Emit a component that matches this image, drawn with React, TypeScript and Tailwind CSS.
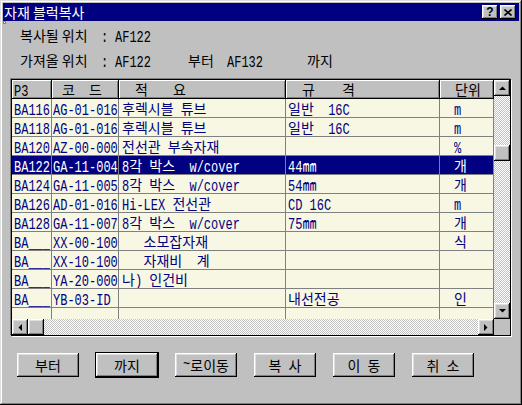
import React from "react";

type Row = { p: string; code: string; desc: string; spec: string; unit: string };

const rows: Row[] = [
  { p: "BA116", code: "AG-01-016", desc: "후렉시블 튜브", spec: "일반  16C", unit: "m" },
  { p: "BA118", code: "AG-01-016", desc: "후렉시블 튜브", spec: "일반  16C", unit: "m" },
  { p: "BA120", code: "AZ-00-000", desc: "전선관 부속자재", spec: "", unit: "%" },
  { p: "BA122", code: "GA-11-004", desc: "8각 박스  w/cover", spec: "44㎜", unit: "개" },
  { p: "BA124", code: "GA-11-005", desc: "8각 박스  w/cover", spec: "54㎜", unit: "개" },
  { p: "BA126", code: "AD-01-016", desc: "Hi-LEX 전선관", spec: "CD 16C", unit: "m" },
  { p: "BA128", code: "GA-11-007", desc: "8각 박스  w/cover", spec: "75㎜", unit: "개" },
  { p: "BA___", code: "XX-00-100", desc: "   소모잡자재", spec: "", unit: "식" },
  { p: "BA___", code: "XX-10-100", desc: "   자재비  계", spec: "", unit: "" },
  { p: "BA___", code: "YA-20-000", desc: "나) 인건비", spec: "", unit: "" },
  { p: "BA___", code: "YB-03-ID", desc: "", spec: "내선전공", unit: "인" },
  { p: "", code: "", desc: "", spec: "", unit: "" },
];

const SELECTED = 3;

// win95 bevels
const raised =
  "bg-[#c0c0c0] shadow-[inset_-1px_-1px_#000,inset_1px_1px_#fff,inset_-2px_-2px_#808080,inset_2px_2px_#dfdfdf]";
const checker =
  "bg-[image:repeating-conic-gradient(#c0c0c0_0%_25%,#ffffff_0%_50%)] bg-[length:2px_2px]";

// DBCS-style text: hangul full width, latin half width
function T({ s }: { s: string }) {
  const parts = s.split(/([\u3000-\u303f\u3130-\u318f\u3300-\u33ff\uac00-\ud7af]+)/);
  return (
    <>
      {parts.map((p, i) =>
        p === "" ? null : i % 2 === 1 ? (
          <span key={i} className="font-['Noto_Sans_CJK_KR',sans-serif] text-[14px]">
            {p}
          </span>
        ) : (
          <span
            key={i}
            className="inline-block scale-y-[1.4] whitespace-pre font-['Liberation_Mono',monospace] text-[12px] leading-[12px]"
          >
            {p}
          </span>
        )
      )}
    </>
  );
}

function Arrow({ dir }: { dir: "up" | "down" | "left" | "right" }) {
  const pts = {
    up: "0,4 7,4 3.5,0.5",
    down: "0,0 7,0 3.5,3.5",
    left: "4,0 4,7 0.5,3.5",
    right: "0,0 0,7 3.5,3.5",
  }[dir];
  const w = dir === "up" || dir === "down" ? 7 : 4;
  const h = dir === "up" || dir === "down" ? 4 : 7;
  return (
    <div className={`flex h-[16px] w-[16px] shrink-0 items-center justify-center ${raised}`}>
      <svg width={w} height={h} viewBox={`0 0 ${w} ${h}`}>
        <polygon points={pts} fill="#000" />
      </svg>
    </div>
  );
}

function GridRow({ r, sel }: { r: Row; sel: boolean }) {
  const tone = sel ? "bg-[#000080] text-white" : "bg-[#f7f7e3] text-[#000080]";
  return (
    <div className={`flex h-[19px] shrink-0 whitespace-pre border-b border-[#808080] leading-[18px] ${tone}`}>
      <div className="w-[40px] shrink-0 overflow-hidden border-r border-[#808080] pl-[2px]"><T s={r.p} /></div>
      <div className="w-[67px] shrink-0 overflow-hidden border-r border-[#808080] pl-[1px]"><T s={r.code} /></div>
      <div className="w-[167px] shrink-0 overflow-hidden border-r border-[#808080] pl-[3px]"><T s={r.desc} /></div>
      <div className="w-[154px] shrink-0 overflow-hidden border-r border-[#808080] pl-[2px]"><T s={r.spec} /></div>
      <div className="w-[54px] shrink-0 overflow-hidden border-r border-[#808080] pl-[14px]"><T s={r.unit} /></div>
    </div>
  );
}

const head = "h-[19px] shrink-0 border-r border-b border-black bg-[#c0c0c0] shadow-[inset_1px_1px_#fff,inset_-1px_-1px_#808080] leading-[18px] text-black";

function Button({ label, def }: { label: string; def?: boolean }) {
  return (
    <div
      className={`flex h-[24px] w-[62px] items-center justify-center whitespace-pre text-black ${raised} ${
        def ? "outline outline-1 outline-black" : ""
      }`}
    >
      <T s={label} />
    </div>
  );
}

export default function App() {
  return (
    <div className="relative h-[405px] w-[522px] bg-[#c0c0c0] p-[3px] font-['Noto_Sans_CJK_KR',sans-serif] text-[14px] shadow-[inset_-1px_-1px_#000,inset_1px_1px_#dfdfdf,inset_-2px_-2px_#808080,inset_2px_2px_#fff]">
      {/* title bar */}
      <div className="flex h-[18px] items-center bg-[#000080] pl-[1px] pr-[3px]">
        <span className="leading-[18px] text-white">자재 블럭복사</span>
        <div className="ml-auto flex gap-[2px]">
          <div className={`flex h-[14px] w-[16px] items-center justify-center font-['Liberation_Sans',sans-serif] text-[12px] font-bold leading-none text-black ${raised}`}>
            ?
          </div>
          <div className={`flex h-[14px] w-[16px] items-center justify-center ${raised}`}>
            <svg width="8" height="7" viewBox="0 0 8 7">
              <path d="M0.5 0.5 L7.5 6.5 M7.5 0.5 L0.5 6.5" stroke="#000" strokeWidth="1.6" />
            </svg>
          </div>
        </div>
      </div>
      <div className="absolute left-[3px] top-[21px] h-[3px] w-[3px] border border-[#808080] bg-white" />

      {/* labels */}
      <div className="mt-[5px] flex h-[18px] items-center pl-[17px] leading-[18px] text-black">
        <span className="w-[81px] whitespace-pre">복사될 위치</span>
        <span className="w-[14px]"><T s=":" /></span>
        <span><T s="AF122" /></span>
      </div>
      <div className="mt-[7px] flex h-[18px] items-center pl-[17px] leading-[18px] text-black">
        <span className="w-[81px] whitespace-pre">가져올 위치</span>
        <span className="w-[14px]"><T s=":" /></span>
        <span className="w-[73px]"><T s="AF122" /></span>
        <span className="w-[39px]">부터</span>
        <span className="w-[80px]"><T s="AF132" /></span>
        <span>까지</span>
      </div>

      {/* grid */}
      <div className="ml-[8px] mt-[10px] flex h-[257px] w-[500px] border border-black shadow-[-1px_-1px_#808080,1px_1px_#fff]">
        <div className="flex w-[482px] flex-col">
          <div className="flex">
            <div className={`${head} w-[40px] pl-[2px]`}><T s="P3" /></div>
            <div className={`${head} flex w-[67px] pl-[10px]`}>
              <span>코</span>
              <span className="ml-[14px]">드</span>
            </div>
            <div className={`${head} flex w-[167px] pl-[16px]`}>
              <span>적</span>
              <span className="ml-[25px]">요</span>
            </div>
            <div className={`${head} flex w-[154px] pl-[16px]`}>
              <span>규</span>
              <span className="ml-[27px]">격</span>
            </div>
            <div className={`${head} w-[54px] pl-[15px]`}>단위</div>
          </div>
          <div className="flex h-[220px] flex-col overflow-hidden bg-[#f7f7e3]">
            {rows.map((r, i) => (
              <GridRow key={i} r={r} sel={i === SELECTED} />
            ))}
          </div>
          <div className="flex h-[16px]">
            <Arrow dir="left" />
            <div className={`h-[16px] w-[16px] shrink-0 ${raised}`} />
            <div className={`flex-1 ${checker}`} />
            <Arrow dir="right" />
          </div>
        </div>
        <div className="flex w-[16px] flex-col">
          <Arrow dir="up" />
          <div className={`flex flex-1 flex-col ${checker}`}>
            <div className={`mt-[49px] h-[16px] w-[16px] ${raised}`} />
          </div>
          <Arrow dir="down" />
          <div className="h-[16px] bg-[#c0c0c0]" />
        </div>
      </div>

      {/* buttons */}
      <div className="mt-[17px] flex gap-[17px] pl-[14px]">
        <Button label="부터" />
        <Button label="까지" def />
        <Button label="~로이동" />
        <Button label="복 사" />
        <Button label="이 동" />
        <Button label="취 소" />
      </div>
    </div>
  );
}
